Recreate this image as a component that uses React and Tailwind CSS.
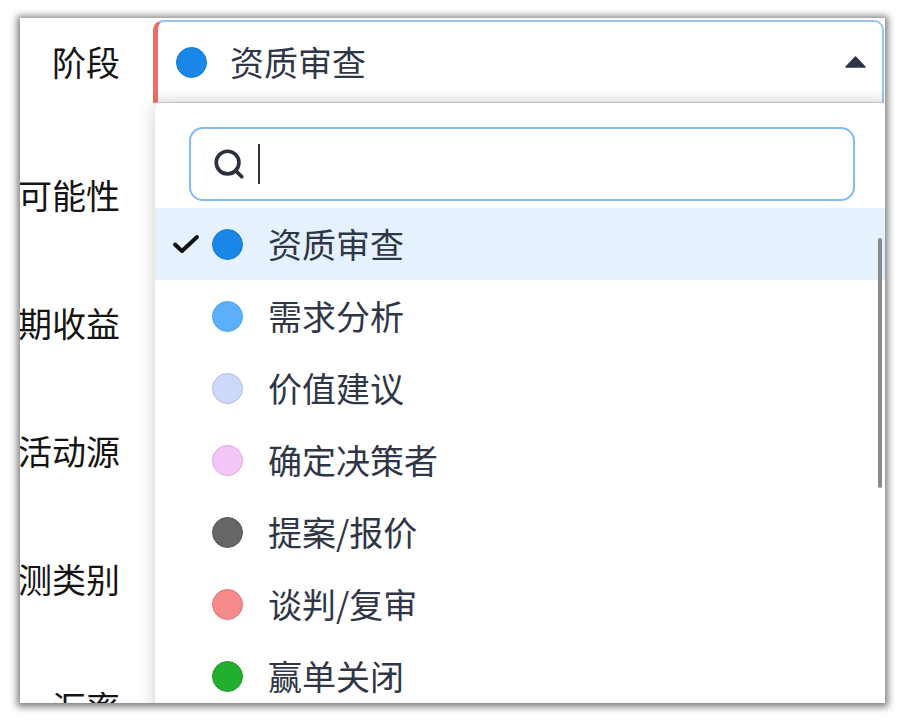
import { Search } from 'lucide-react'

const STAGES = [
  { name: '资质审查', dot: 'bg-[#1a86e8] border-[#1677d4]' },
  { name: '需求分析', dot: 'bg-[#5cb0fa] border-[#4a9fe8]' },
  { name: '价值建议', dot: 'bg-[#cdd9fb] border-[#aeb9e2]' },
  { name: '确定决策者', dot: 'bg-[#f4c5f7] border-[#dca6de]' },
  { name: '提案/报价', dot: 'bg-[#666666] border-[#555555]' },
  { name: '谈判/复审', dot: 'bg-[#f78a8a] border-[#e07474]' },
  { name: '赢单关闭', dot: 'bg-[#22ae2e] border-[#1c9a27]' },
]

const LABELS = ['成交可能性', '预期收益', '市场活动源', '预测类别', '汇率']

function Dot({ cls }) {
  return <span className={`block w-[31px] h-[31px] rounded-full border shrink-0 ${cls}`} />
}

function CheckMark() {
  return (
    <svg width="28" height="22" viewBox="0 0 28 22" fill="none">
      <path d="M3 11.5 L10 18 L25 4" stroke="#111" strokeWidth="4" strokeLinecap="round" strokeLinejoin="round" />
    </svg>
  )
}

export default function App() {
  return (
    <div className="w-[905px] h-[723px] bg-white pl-[20px] pt-[18px] font-['Noto_Sans_CJK_SC','Noto_Sans',sans-serif]">
      <div className="relative w-[865px] h-[685px] bg-white overflow-hidden shadow-[0_1px_7px_3px_rgba(0,0,0,0.5)]">
        {/* form */}
        <div className="flex">
          <div className="w-[100px] shrink-0 flex flex-col">
            <div className="h-[83px] mt-[2px] flex items-center justify-end whitespace-nowrap text-[34px] text-[#151515] leading-none">阶段</div>
            <div className="mt-[72px] flex flex-col gap-[88px]">
              {LABELS.map(l => (
                <div key={l} className="h-[40px] flex items-center justify-end whitespace-nowrap text-[34px] text-[#151515] leading-none">{l}</div>
              ))}
            </div>
          </div>

          {/* trigger */}
          <div className="ml-[33px] mt-[2px] w-[731px] h-[83px] flex items-center bg-white rounded-t-[10px] border-t-2 border-r-2 border-b border-l-[5px] border-t-[#93c6f7] border-r-[#93c6f7] border-b-[#cfcfcf] border-l-[#f26a6a] shadow-[inset_0_-10px_12px_-8px_rgba(0,0,0,0.06)] pl-[18px] pr-[16px]">
            <Dot cls={STAGES[0].dot} />
            <span className="ml-[23px] text-[34px] text-[#2f3747] leading-none">资质审查</span>
            <svg className="ml-auto" width="21" height="12" viewBox="0 0 21 12">
              <path d="M10.5 1 L20 11 L1 11 Z" fill="#2d3545" stroke="#2d3545" strokeWidth="1.5" strokeLinejoin="round" />
            </svg>
          </div>
        </div>

        {/* dropdown */}
        <div className="absolute left-[135px] top-[85px] w-[732px] h-[640px] bg-white rounded-lg shadow-[0_2px_18px_rgba(0,0,0,0.2)] z-10 pt-[24px]">
          <div className="ml-[34px] w-[666px] h-[74px] border-2 border-[#82bcf6] rounded-[14px] flex items-center pl-[21px]">
            <Search size={34} strokeWidth={2.6} color="#2b3140" />
            <span className="ml-[12px] w-[2px] h-[40px] bg-[#333]" />
          </div>

          <div className="mt-[7px]">
            {STAGES.map((s, i) => (
              <div key={s.name} className={`h-[72px] flex items-center pl-[17px] ${i === 0 ? 'bg-[#e5f1fd]' : ''}`}>
                <span className="w-[40px] shrink-0 flex items-center">{i === 0 && <CheckMark />}</span>
                <Dot cls={s.dot} />
                <span className="ml-[25px] text-[34px] text-[#2f3747] leading-none whitespace-nowrap">{s.name}</span>
              </div>
            ))}
          </div>

          {/* scrollbar thumb */}
          <div className="absolute right-[5px] top-[135px] w-[4px] h-[250px] rounded-full bg-[#8a8a8a]" />
        </div>
      </div>
    </div>
  )
}
